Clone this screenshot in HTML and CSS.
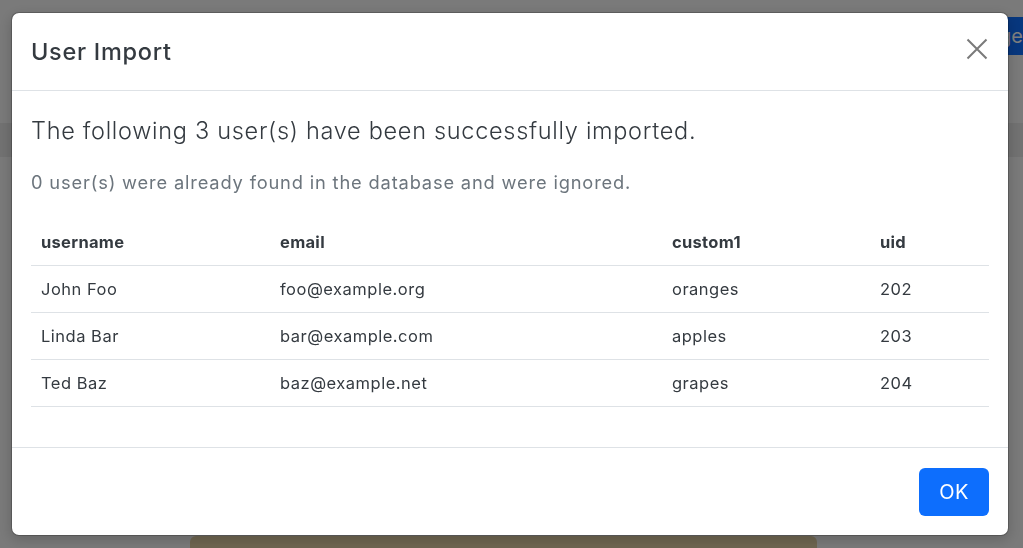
FILE: index.html
```html
<!DOCTYPE html>
<html lang="en">
<head>
<meta charset="utf-8">
<title>User Import</title>
<link rel="stylesheet" href="styles.css">
</head>
<body>
<div class="page">
  <div class="bg-button">Change</div>
  <div class="bg-bar"></div>
  <div class="bg-card"></div>
</div>
<div class="backdrop"></div>
<div class="modal">
  <div class="modal-content">
    <div class="modal-header">
      <h5 class="modal-title">User Import</h5>
      <button class="btn-close" aria-label="Close">
        <svg width="22" height="22" viewBox="0 0 22 22"><path d="M1.5 1.5 20.5 20.5M20.5 1.5 1.5 20.5" stroke="currentColor" stroke-width="2" fill="none"/></svg>
      </button>
    </div>
    <div class="modal-body">
      <p class="lead">The following 3 user(s) have been successfully imported.</p>
      <p class="muted">0 user(s) were already found in the database and were ignored.</p>
      <table class="table">
        <thead>
          <tr><th class="c1">username</th><th class="c2">email</th><th class="c3">custom1</th><th class="c4">uid</th></tr>
        </thead>
        <tbody>
          <tr><td>John Foo</td><td>foo@example.org</td><td>oranges</td><td>202</td></tr>
          <tr><td>Linda Bar</td><td>bar@example.com</td><td>apples</td><td>203</td></tr>
          <tr><td>Ted Baz</td><td>baz@example.net</td><td>grapes</td><td>204</td></tr>
        </tbody>
      </table>
    </div>
    <div class="modal-footer">
      <button class="btn-primary">OK</button>
    </div>
  </div>
</div>
</body>
</html>
```

FILE: styles.css
```css
html, body {
  margin: 0;
  padding: 0;
  height: 100%;
  overflow: hidden;
}
body {
  font-family: Inter, "Noto Sans", sans-serif;
  background: #f4f4f4;
  color: #343a40;
}
.page {
  position: absolute;
  inset: 0;
  overflow: hidden;
}
.bg-button {
  position: absolute;
  left: 900px;
  top: 17px;
  width: 131px;
  height: 38px;
  background: #0d6efd;
  color: #fff;
  font-size: 20px;
  line-height: 38px;
  text-align: right;
  padding-right: 8px;
  box-sizing: border-box;
  border-radius: 4px;
  white-space: nowrap;
}
.bg-bar {
  position: absolute;
  left: 0;
  right: 0;
  top: 123px;
  height: 34px;
  background: #e4e4e4;
}
.bg-card {
  position: absolute;
  left: 190px;
  width: 627px;
  top: 536px;
  height: 40px;
  background: #ddcca2;
  border-radius: 6px 6px 0 0;
}
.backdrop {
  position: fixed;
  inset: 0;
  background: rgba(0, 0, 0, 0.5);
}
.modal {
  position: fixed;
  inset: 0;
  padding: 12px 14px 0 11px;
}
.modal-content {
  position: relative;
  width: 998px;
  height: 524px;
  box-sizing: border-box;
  background: #fff;
  border: 1px solid rgba(0, 0, 0, 0.2);
  border-radius: 8px;
  box-shadow: 0 4px 14px rgba(0, 0, 0, 0.18);
  display: flex;
  flex-direction: column;
  background-clip: padding-box;
}
.modal-header {
  display: flex;
  align-items: center;
  justify-content: space-between;
  height: 78px;
  flex-shrink: 0;
  box-sizing: border-box;
  padding: 0 20px 0 19px;
  border-bottom: 1px solid #dee2e6;
}
.modal-title {
  margin: 0;
  font-size: 23.5px;
  font-weight: 500;
  line-height: 36px;
  letter-spacing: 0.72px;
  color: #343a40;
  position: relative;
  top: 0;
}
.btn-close {
  border: 0;
  background: transparent;
  color: #7a7a7a;
  padding: 0;
  width: 22px;
  height: 22px;
  display: flex;
  position: relative;
  top: -3px;
}
.modal-body {
  flex: 1;
  padding: 22px 19px 20px 19px;
}
.lead {
  margin: 0 0 20px;
  font-size: 23.5px;
  font-weight: 300;
  line-height: 36px;
  letter-spacing: 0.7px;
  color: #343a40;
}
.muted {
  margin: 0 0 23px;
  font-size: 18.3px;
  line-height: 27px;
  letter-spacing: 0.83px;
  color: #6c757d;
}
.table {
  width: 958px;
  border-collapse: collapse;
  font-size: 16.5px;
  letter-spacing: 0.5px;
  color: #343a40;
}
.table th, .table td {
  text-align: left;
  padding: 0 10px;
  height: 46px;
  border-bottom: 1px solid #dee2e6;
  vertical-align: middle;
}
.table th {
  font-weight: 700;
  letter-spacing: 0.3px;
  color: #343a40;
}
.c1 { width: 219px; }
.c2 { width: 372px; }
.c3 { width: 188px; }
.c4 { width: 99px; }
.modal-footer {
  display: flex;
  justify-content: flex-end;
  align-items: center;
  height: 88px;
  flex-shrink: 0;
  box-sizing: border-box;
  padding: 0 19px;
  border-top: 1px solid #dee2e6;
}
.btn-primary {
  width: 70px;
  height: 48px;
  border: 0;
  border-radius: 6px;
  background: #0d6efd;
  color: #fff;
  font-family: Inter, "Noto Sans", sans-serif;
  font-size: 20px;
  letter-spacing: 0.5px;
  padding: 0;
}
```
